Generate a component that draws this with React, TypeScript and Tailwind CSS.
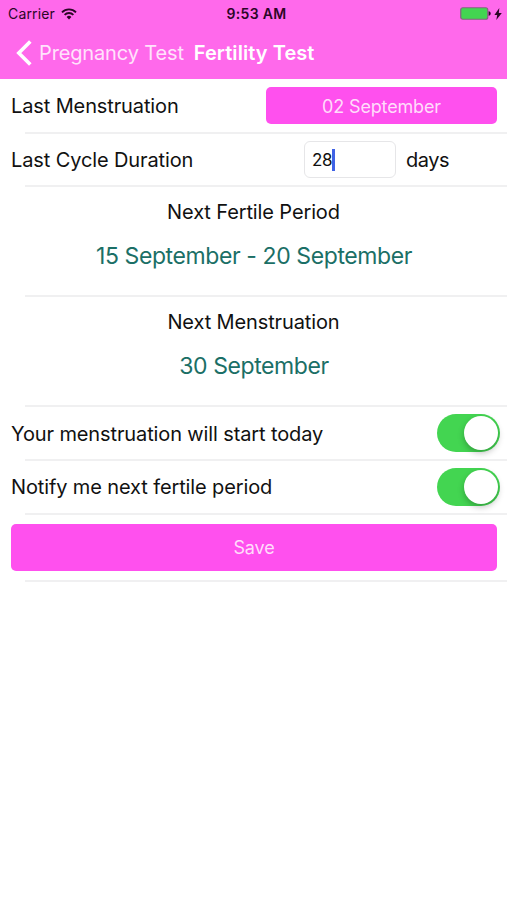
import { useState } from 'react';
import type { FC, ReactNode } from 'react';

type RowProps = {
  className: string;
  children: ReactNode;
};

const Row: FC<RowProps> = ({ className, children }) => (
  <section>
    <div className={className}>{children}</div>
    <div className="ml-[25px] h-[2px] bg-[#f0f0f1]" />
  </section>
);

type ToggleProps = {
  label: string;
  checked: boolean;
  onChange: (checked: boolean) => void;
};

const Toggle: FC<ToggleProps> = ({ label, checked, onChange }) => (
  <button
    type="button"
    role="switch"
    aria-label={label}
    aria-checked={checked}
    className={`flex h-[38px] w-[63px] items-center rounded-full px-[2px] ${
      checked ? 'justify-end bg-[#43d551]' : 'justify-start bg-[#e5e5ea]'
    }`}
    onClick={() => onChange(!checked)}
  >
    <span className="h-[34px] w-[34px] rounded-full bg-white shadow-[0_3px_6px_rgba(0,0,0,0.25)]" />
  </button>
);

const StatusBar: FC = () => (
  <div className="grid h-[27px] grid-cols-3 items-center pr-[5px] pl-[8px] leading-4 text-[#2b0626]">
    <div className="flex items-center gap-[6px]">
      <span className="text-[14px] tracking-[0.15px]">Carrier</span>
      <svg width="16" height="12" viewBox="0 0 16 12" fill="none" stroke="currentColor" strokeWidth="1.9">
        <path d="M1 4.3a9.9 9.9 0 0 1 14 0" />
        <path d="M3.6 6.9a6.2 6.2 0 0 1 8.8 0" />
        <path d="M5.6 9a3.4 3.4 0 0 1 4.8 0L8 11.4Z" fill="currentColor" stroke="none" />
      </svg>
    </div>
    <span className="pl-[3px] text-center text-[14px] font-semibold tracking-[0.35px]">9:53 AM</span>
    <div className="flex items-center justify-end gap-[3px]">
      <svg width="31" height="13" viewBox="0 0 31 13">
        <rect x="0.75" y="0.75" width="27" height="11.5" rx="2" fill="#43d551" stroke="#85647f" strokeWidth="1.2" />
        <path d="M28.6 4.2c2.8 0 2.8 4.6 0 4.6Z" fill="#2b0626" />
      </svg>
      <svg width="8" height="12" viewBox="0 0 8 12" fill="#2b0626">
        <path d="M5.3 0 0.4 6.9h2.8L2.3 12 7.8 5H4.8Z" />
      </svg>
    </div>
  </div>
);

const App: FC = () => {
  const [duration, setDuration] = useState('28');
  const [startsToday, setStartsToday] = useState(true);
  const [notify, setNotify] = useState(true);

  return (
    <div className="min-h-screen w-full bg-white font-['Inter','Liberation_Sans',sans-serif] text-[20px] leading-6 tracking-[-0.12px] text-[#111]">
      <header className="h-[79px] bg-[#ff69eb]">
        <StatusBar />
        <nav className="flex h-[52px] items-center pl-4 text-white">
          <button type="button" className="flex items-center gap-[7px] tracking-[-0.14px] text-[#ffe3fb]">
            <svg width="16" height="26" viewBox="0 0 16 26" fill="none" stroke="#fff" strokeWidth="3.6">
              <path d="M14.3 1.5 2.8 13l11.5 11.5" />
            </svg>
            <span>Pregnancy Test</span>
          </button>
          <h1 className="ml-[10px] font-semibold tracking-[0.06px]">Fertility Test</h1>
        </nav>
      </header>

      <main>
        <Row className="flex h-[53px] items-center justify-between pr-[10px] pl-[11px]">
          <span>Last Menstruation</span>
          <button
            type="button"
            className="h-[37px] w-[231px] rounded-[5px] bg-[#ff50ee] pt-[2px] text-[18px] tracking-[-0.15px] text-[#ffdcfb]"
          >
            02 September
          </button>
        </Row>

        <Row className="flex h-[51px] items-center pl-[11px]">
          <span className="w-[293px]">Last Cycle Duration</span>
          <label className="flex h-[37px] w-[92px] items-center rounded-[6px] border border-[#e6e6e8] pl-[7px] text-[17px]">
            <input
              className="w-[20px] bg-transparent tracking-[-0.3px] outline-none"
              inputMode="numeric"
              value={duration}
              onChange={(event) => setDuration(event.target.value)}
            />
            <span className="h-[22px] w-[3px] bg-[#3f62e6]" />
          </label>
          <span className="ml-[10px] tracking-[-0.5px]">days</span>
        </Row>

        <Row className="flex h-[108px] flex-col items-center pt-[13px]">
          <span>Next Fertile Period</span>
          <span className="mt-5 pl-px text-[23px] tracking-[-0.4px] text-[#1b6f66]">15 September - 20 September</span>
        </Row>

        <Row className="flex h-[108px] flex-col items-center pt-[13px]">
          <span>Next Menstruation</span>
          <span className="mt-5 pl-px text-[23px] tracking-[-0.4px] text-[#1b6f66]">30 September</span>
        </Row>

        <Row className="flex h-[52px] items-center justify-between pr-[7px] pl-[11px]">
          <span className="pt-px">Your menstruation will start today</span>
          <Toggle label="Your menstruation will start today" checked={startsToday} onChange={setStartsToday} />
        </Row>

        <Row className="flex h-[52px] items-center justify-between pr-[7px] pl-[11px]">
          <span>Notify me next fertile period</span>
          <Toggle label="Notify me next fertile period" checked={notify} onChange={setNotify} />
        </Row>

        <Row className="flex h-[65px] items-center pr-[10px] pl-[11px]">
          <button
            type="button"
            className="h-[47px] w-full rounded-[5px] bg-[#ff50ee] text-[18px] tracking-[-0.15px] text-[#ffdcfb]"
          >
            Save
          </button>
        </Row>
      </main>
    </div>
  );
};

export default App;
